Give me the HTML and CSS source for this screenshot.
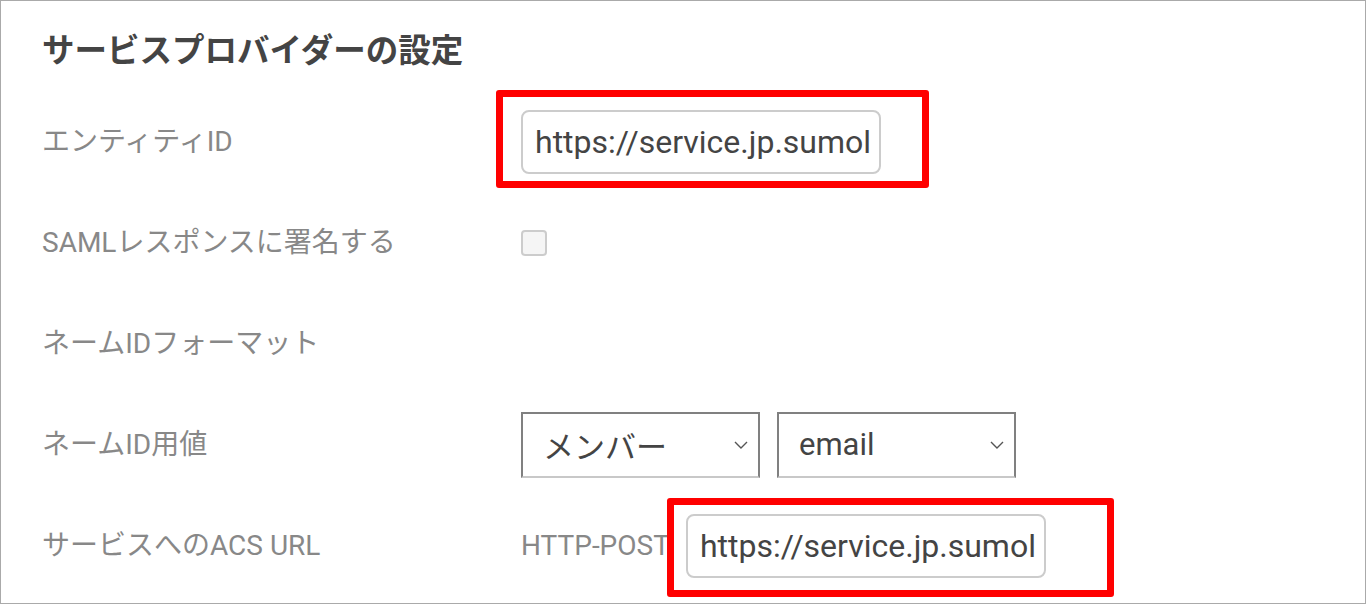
FILE: index.html
```html
<!DOCTYPE html>
<html lang="ja">
<head>
<meta charset="utf-8">
<title>サービスプロバイダーの設定</title>
<link rel="stylesheet" href="styles.css">
</head>
<body>
<div class="panel">
  <h2 class="title">サービスプロバイダーの設定</h2>
  <div class="rows">
    <div class="row">
      <div class="label">エンティティID</div>
      <div class="control">
        <span class="hl hl-entity"><input class="text" type="text" value="https://service.jp.sumologic.com/sumo/saml" readonly></span>
      </div>
    </div>
    <div class="row">
      <div class="label">SAMLレスポンスに署名する</div>
      <div class="control"><span class="checkbox"></span></div>
    </div>
    <div class="row">
      <div class="label">ネームIDフォーマット</div>
      <div class="control"></div>
    </div>
    <div class="row">
      <div class="label">ネームID用値</div>
      <div class="control selects">
        <div class="select"><span>メンバー</span><svg class="chev" width="14" height="8" viewBox="0 0 14 8"><path d="M1 1 L7 7 L13 1" fill="none" stroke="#555" stroke-width="1.4"/></svg></div>
        <div class="select"><span>email</span><svg class="chev" width="14" height="8" viewBox="0 0 14 8"><path d="M1 1 L7 7 L13 1" fill="none" stroke="#555" stroke-width="1.4"/></svg></div>
      </div>
    </div>
    <div class="row">
      <div class="label">サービスへのACS URL</div>
      <div class="control">
        <span class="method">HTTP-POST</span>
        <span class="hl hl-acs"><input class="text" type="text" value="https://service.jp.sumologic.com/sumo/saml/consume" readonly></span>
      </div>
    </div>
  </div>
</div>
</body>
</html>
```

FILE: styles.css
```css
html, body {
  margin: 0;
  padding: 0;
  background: #fff;
}

body {
  font-family: Roboto, "Noto Sans CJK JP", sans-serif;
  color: #444;
}

.panel {
  box-sizing: border-box;
  width: 1366px;
  height: 604px;
  border: 1px solid #aaa;
  padding: 0 0 0 41px;
  overflow: hidden;
}

.title {
  margin: 0;
  padding: 30px 0 20px;
  height: 40px;
  line-height: 40px;
  font-size: 32.5px;
  font-weight: 700;
  color: #444;
}

.rows {
  display: flex;
  flex-direction: column;
}

.row {
  display: grid;
  grid-template-columns: 479px 1fr;
  height: 101px;
  align-items: center;
}

.label {
  font-size: 28px;
  color: #888;
  line-height: 36px;
}

.control {
  display: flex;
  align-items: center;
}

.hl {
  position: relative;
  display: inline-block;
}

.hl::after {
  content: "";
  position: absolute;
  border: 7px solid #f00;
  border-radius: 3px;
  pointer-events: none;
}

.hl-entity::after {
  top: -20px;
  bottom: -14px;
  left: -25px;
  right: -48px;
}

.hl-acs::after {
  top: -16px;
  bottom: -19px;
  left: -19px;
  right: -68px;
}

.text {
  box-sizing: border-box;
  display: block;
  width: 360px;
  height: 64px;
  border: 2px solid #ccc;
  border-radius: 8px;
  padding: 0 8px 0 12px;
  font-family: Roboto, "Noto Sans CJK JP", sans-serif;
  font-size: 32px;
  color: #444;
  background: #fff;
  outline: none;
}

.checkbox {
  box-sizing: border-box;
  display: block;
  width: 26px;
  height: 26px;
  border: 2px solid #ccc;
  border-radius: 4px;
  background: #f5f5f5;
}

.selects {
  gap: 17px;
}

.select {
  box-sizing: border-box;
  width: 239px;
  height: 66px;
  border: 2px solid #808080;
  border-bottom-color: #c8c8c8;
  display: flex;
  align-items: center;
  justify-content: space-between;
  padding: 0 10px 0 20px;
  font-size: 31px;
  color: #444;
  background: #fff;
}

.chev {
  display: block;
}

.method {
  font-size: 28px;
  color: #888;
  margin-right: 16px;
}
```
